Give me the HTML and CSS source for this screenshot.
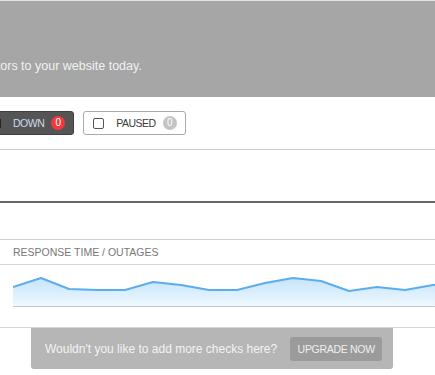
FILE: index.html
```html
<!DOCTYPE html>
<html lang="en">
<head>
    <meta charset="UTF-8">
    <meta name="viewport" content="width=device-width, initial-scale=1.0">
    <title>Monitors</title>
    <link rel="stylesheet" href="styles.css">
</head>
<body>
    <header class="intro">
        <p>Add monitors to your website today.</p>
    </header>

    <div class="filters">
        <button class="filter active">
            <span class="check"></span>
            <span class="label">DOWN</span>
            <span class="count red">0</span>
        </button>
        <button class="filter">
            <span class="check"></span>
            <span class="label">PAUSED</span>
            <span class="count">0</span>
        </button>
    </div>

    <div class="monitor-list"></div>

    <div class="panel">
        <div class="panel-head">RESPONSE TIME / OUTAGES</div>
        <div class="chart">
            <svg width="440" height="62" viewBox="0 0 440 62">
                <defs>
                    <linearGradient id="fill" x1="0" y1="0" x2="0" y2="1">
                        <stop offset="0" stop-color="#c6e4fa"/>
                        <stop offset="1" stop-color="#eef8fe"/>
                    </linearGradient>
                </defs>
                <path d="M0 22 L28 13 L56 24 L84 25 L112 25 L140 17 L168 20 L196 25 L224 25 L252 18 L280 13 L308 16 L336 26 L364 22 L392 25 L420 20 L448 18 L448 41 L0 41 Z" fill="url(#fill)"/>
                <polyline points="0,22 28,13 56,24 84,25 112,25 140,17 168,20 196,25 224,25 252,18 280,13 308,16 336,26 364,22 392,25 420,20 448,18" fill="none" stroke="#5aaef0" stroke-width="2" stroke-linejoin="round"/>
                <line x1="0" y1="41.5" x2="440" y2="41.5" stroke="#c8c8c8" stroke-width="1"/>
            </svg>
        </div>
    </div>

    <div class="upsell">
        <span class="upsell-text">Wouldn't you like to add more checks here?</span>
        <button class="upgrade">UPGRADE NOW</button>
    </div>
</body>
</html>
```

FILE: styles.css
```css
* {
    margin: 0;
    padding: 0;
    box-sizing: border-box;
}

body {
    font-family: "Liberation Sans", Arial, sans-serif;
    background: #fff;
    width: 435px;
    height: 375px;
    overflow: hidden;
}

/* Bandeau du haut */
.intro {
    border-top: 1px solid #e2e2e2;
    background: #a6a6a6;
    height: 97px;
    padding-top: 58px;
}

.intro p {
    font-size: 12.5px;
    line-height: 15px;
    color: #eef2f5;
    white-space: nowrap;
    text-indent: -56px;
}

/* Filtres */
.filters {
    display: flex;
    gap: 9px;
    margin-left: -20px;
    padding: 14px 0;
    border-bottom: 1px solid #cfcfcf;
}

.filter {
    display: flex;
    align-items: center;
    height: 24px;
    padding: 0 8px 0 9px;
    border: 1px solid #a9a9a9;
    border-radius: 3px;
    background: #fff;
    font-family: inherit;
    font-size: 10.5px;
    letter-spacing: -0.5px;
    color: #3a3a3a;
}

.filter.active {
    background: #555;
    border-color: #3f3f3f;
    color: #c9dbee;
}

.check {
    width: 11px;
    height: 11px;
    border: 1.5px solid #555;
    border-radius: 2px;
    margin-right: 12px;
}

.filter.active .check {
    background: #222;
    border-color: #222;
}

.count {
    width: 14px;
    height: 14px;
    line-height: 14px;
    border-radius: 50%;
    margin-left: 7px;
    background: #c4c4c4;
    color: #fff;
    font-size: 10px;
    letter-spacing: 0;
    text-align: center;
}

.count.red {
    background: #f03a3f;
}

.monitor-list {
    height: 53px;
    border-bottom: 2px solid #666;
}

/* Graphique */
.panel {
    margin-top: 36px;
    border-top: 1px solid #cfcfcf;
}

.panel-head {
    height: 25px;
    line-height: 24px;
    padding-left: 13px;
    border-bottom: 1px solid #d6d6d6;
    font-size: 10.5px;
    color: #777;
}

.chart {
    height: 63px;
    padding-left: 13px;
    border-bottom: 1px solid #d6d6d6;
    overflow: hidden;
}

.chart svg {
    display: block;
}

/* Bandeau upgrade */
.upsell {
    display: flex;
    align-items: center;
    justify-content: space-between;
    gap: 13px;
    margin-left: 31px;
    width: 362px;
    height: 41px;
    padding: 0 14px;
    background: #b6b6b6;
    border-radius: 0 0 3px 3px;
    font-size: 12px;
    color: #f3f3f3;
}

.upsell-text {
    white-space: nowrap;
}

.upgrade {
    flex-shrink: 0;
    width: 92px;
    height: 24px;
    border: none;
    border-radius: 3px;
    background: #9b9b9b;
    color: #efefef;
    font-family: inherit;
    font-size: 10.5px;
    letter-spacing: -0.3px;
}
```
